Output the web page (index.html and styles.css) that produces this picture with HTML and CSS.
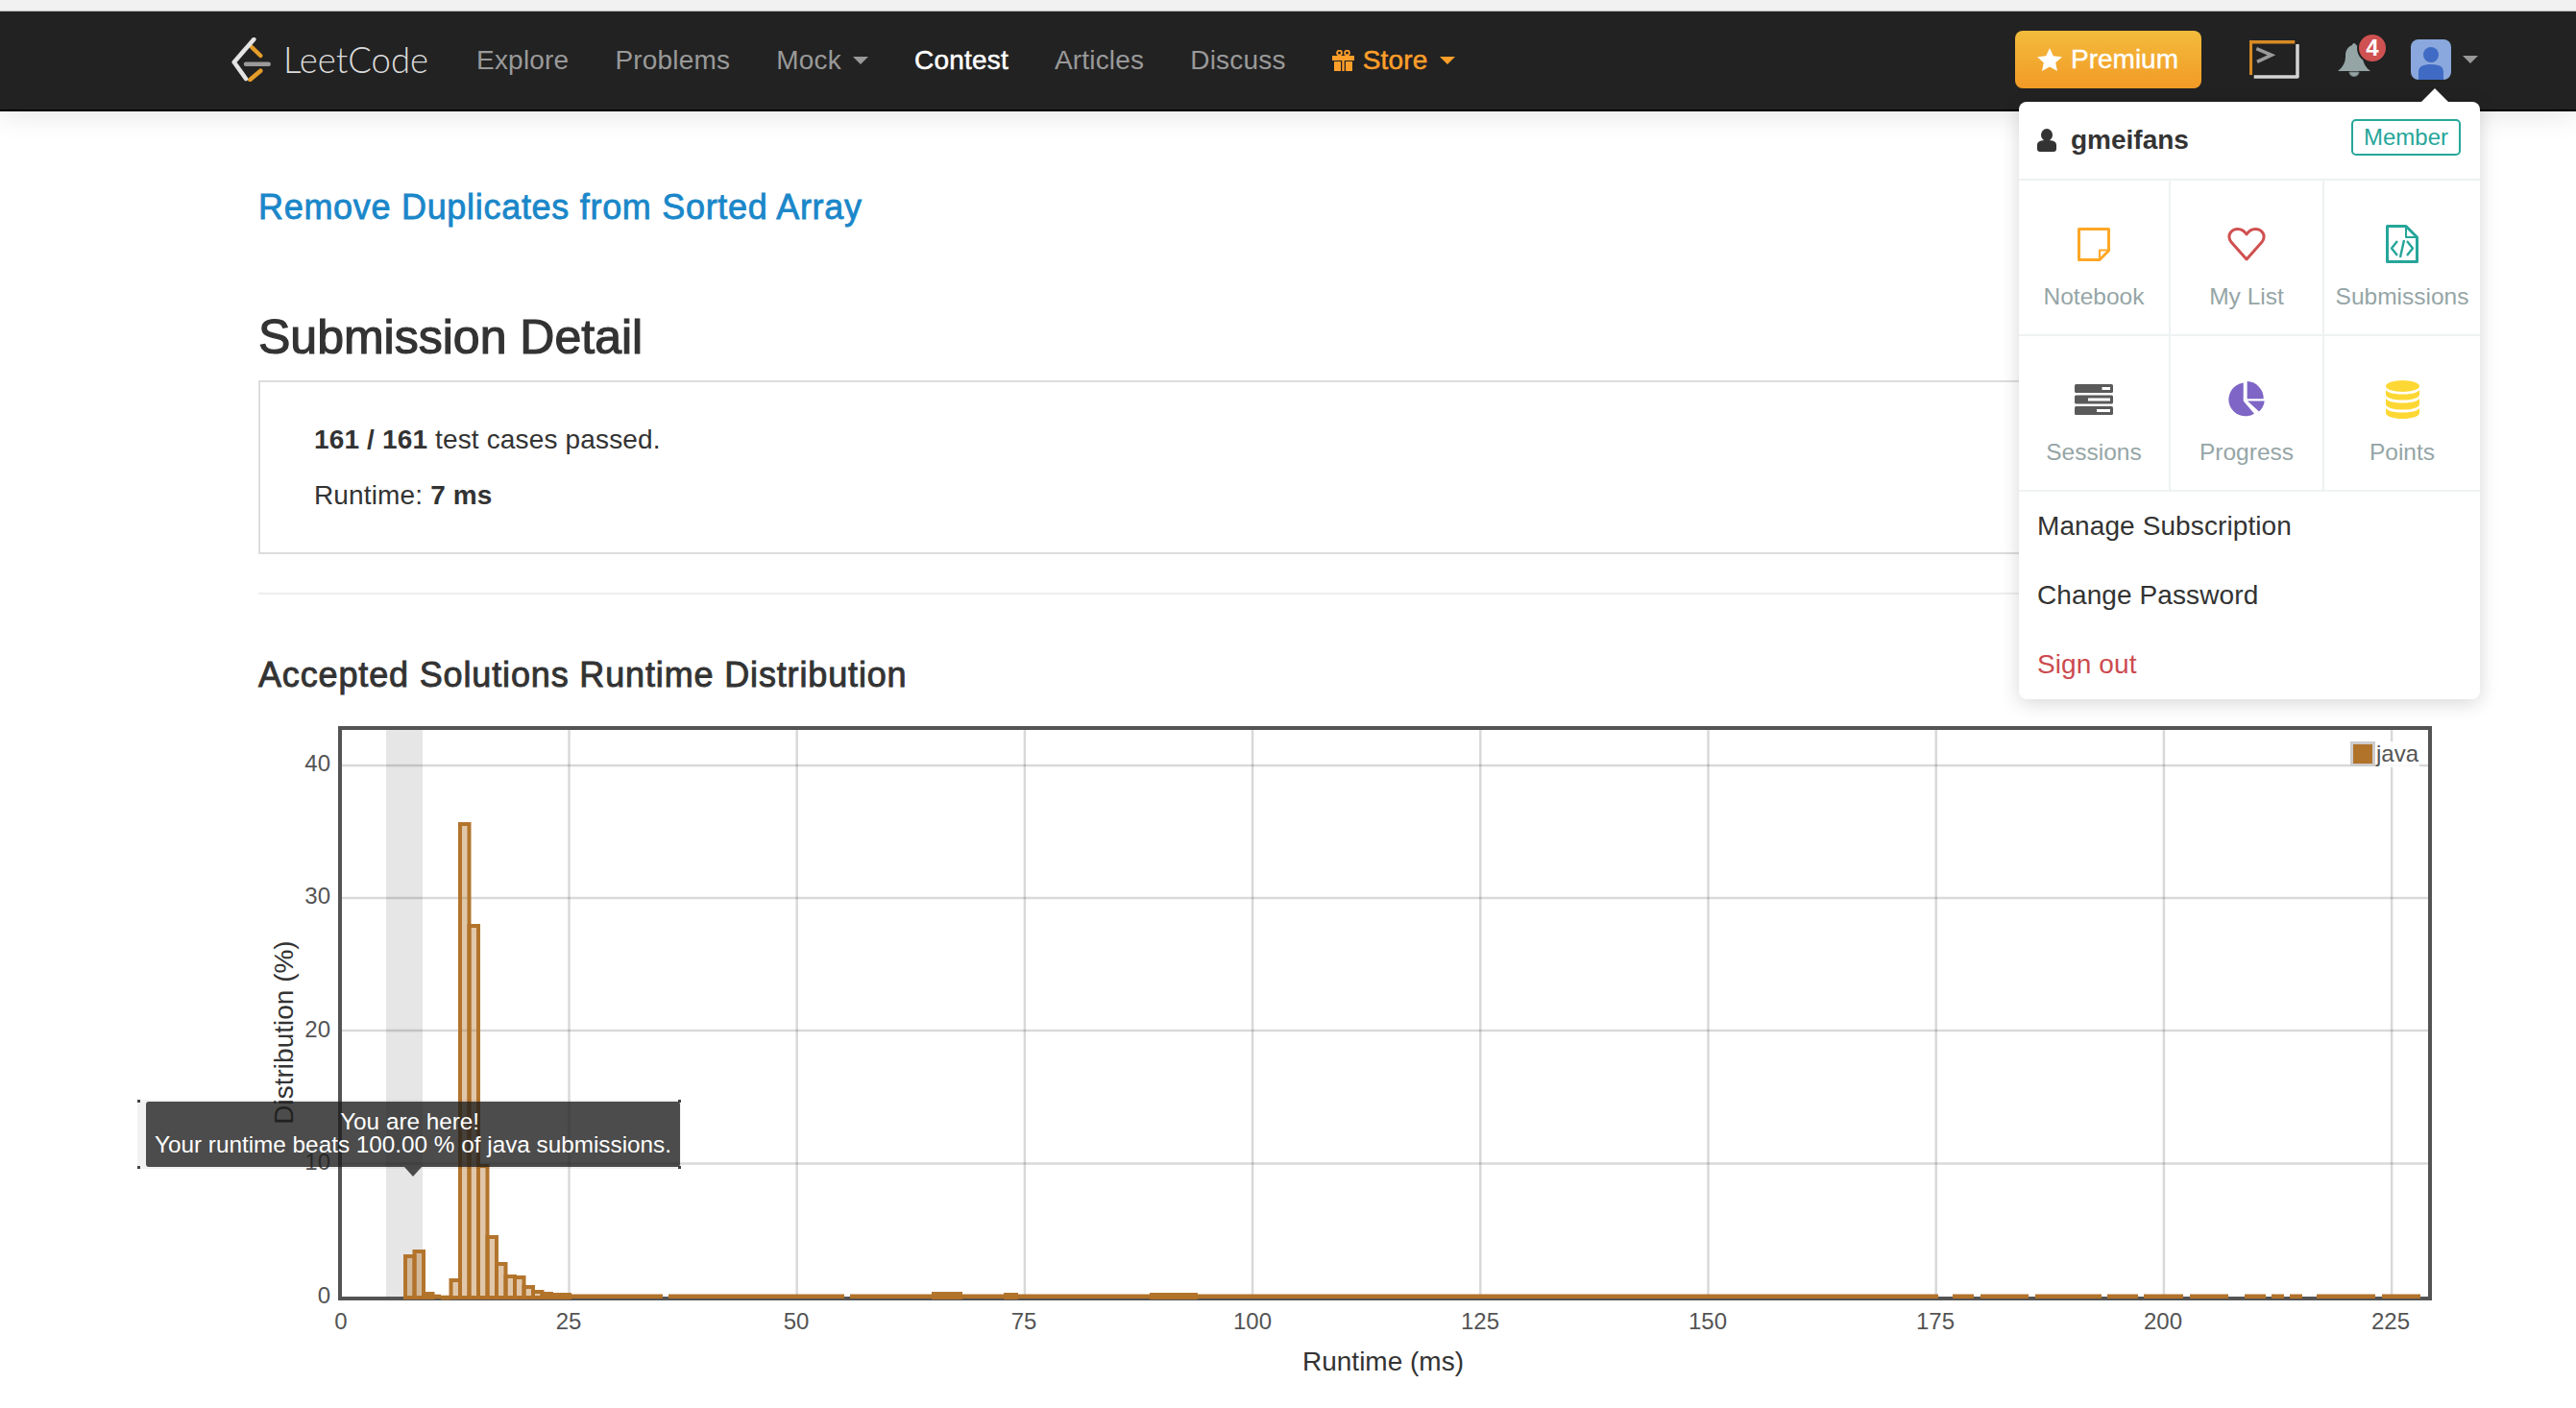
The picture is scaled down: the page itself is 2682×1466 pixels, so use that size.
FILE: index.html
```html
<!DOCTYPE html>
<html lang="en">
<head>
    <meta charset="UTF-8">
    <title>Submission Detail - LeetCode</title>
    <link rel="stylesheet" href="styles.css">
</head>
<body>
    <div class="top-strip"></div>

    <!-- Navbar -->
    <nav class="navbar">
        <a class="brand">
            <svg class="brand-logo" width="44" height="46" viewBox="0 0 44 46">
                <path d="M22 10 L31.3 19" stroke="#e59d2a"/>
                <path d="M31.3 34.7 L20.3 44" stroke="#e59d2a"/>
                <path d="M24.3 2 L3.7 25.7 L16 43" stroke="#e4e4e4"/>
                <path d="M16 27.7 H39.7" stroke="#9a9a9a"/>
            </svg>
            <span class="brand-name">LeetCode</span>
        </a>
        <a class="nav-link">Explore</a>
        <a class="nav-link">Problems</a>
        <a class="nav-link">Mock<i class="caret"></i></a>
        <a class="nav-link active">Contest</a>
        <a class="nav-link">Articles</a>
        <a class="nav-link">Discuss</a>
        <a class="nav-link store">
            <svg class="gift" width="23" height="22" viewBox="0 0 23 22">
                <circle cx="7.5" cy="3" r="2.4" fill="none" stroke="#ff9f2a" stroke-width="1.8"/>
                <circle cx="15.5" cy="3" r="2.4" fill="none" stroke="#ff9f2a" stroke-width="1.8"/>
                <rect x="0" y="6" width="23" height="5" fill="#ff9f2a"/>
                <rect x="2" y="12" width="7" height="10" fill="#ff9f2a"/>
                <rect x="14" y="12" width="7" height="10" fill="#ff9f2a"/>
                <rect x="10.3" y="6" width="2.4" height="16" fill="#ff9f2a"/>
            </svg>Store<i class="caret"></i>
        </a>

        <div class="nav-right">
            <a class="premium-btn">
                <svg width="26" height="24" viewBox="0 0 26 24"><path d="M13 0 L16.8 8.2 L26 9.2 L19.2 15.2 L21 24 L13 19.6 L5 24 L6.8 15.2 L0 9.2 L9.2 8.2 Z" fill="#fff"/></svg>
                Premium
            </a>
            <svg class="terminal" width="52" height="40" viewBox="0 0 52 40" fill="none" stroke-width="3.5">
                <path d="M47.3 1.7 H1.3 V36" stroke="#d68a24"/>
                <path d="M50 4 V38 H4.7" stroke="#d4d4d4" stroke-linejoin="round"/>
                <path d="M7.3 8.7 L23 15.3 L8 22.3" stroke="#9a9a9a"/>
            </svg>
            <div class="bell">
                <svg width="34" height="36" viewBox="0 0 34 36">
                    <path d="M17 1 C16 1 15 2 15 3 C10 5 8 9 8 14 C8 21 6 25 0 30 H34 C28 25 26 21 26 14 C26 8 23 4 19 3 C19 2 18 1 17 1 Z" fill="#95a5a6"/>
                    <path d="M12 31 A5 4.5 0 0 0 22 31 Z" fill="#95a5a6" stroke="#6f7c7d" stroke-width="1"/>
                </svg>
                <span class="badge">4</span>
            </div>
            <div class="avatar">
                <svg width="42" height="42" viewBox="0 0 42 42">
                    <circle cx="21" cy="16" r="8" fill="#3f6bc4"/>
                    <path d="M8 42 V34 C8 28 13 26 21 26 S34 28 34 34 V42 Z" fill="#3f6bc4"/>
                </svg>
            </div>
            <i class="caret avatar-caret"></i>
        </div>
    </nav>

    <!-- User dropdown -->
    <div class="user-menu">
        <div class="user-head">
            <svg width="20" height="24" viewBox="0 0 20 24">
                <ellipse cx="10" cy="6.5" rx="6" ry="6.5" fill="#333"/>
                <path d="M0 21 V17 C0 13 4 12 10 12 S20 13 20 17 V21 Q20 24 17 24 H3 Q0 24 0 21 Z" fill="#333"/>
            </svg>
            <span class="user-name">gmeifans</span>
            <span class="member-tag">Member</span>
        </div>
        <div class="menu-grid">
            <a class="menu-cell">
                <span class="cell-icon">
                    <svg width="34" height="35" viewBox="0 0 34 35" fill="none" stroke="#ffa726" stroke-width="3" stroke-linejoin="round">
                        <path d="M1.5 1.5 H32.5 V24 L23 33.5 H1.5 Z"/>
                        <path d="M32.5 23.5 H23 V33.5" stroke-width="2"/>
                    </svg>
                </span>
                Notebook
            </a>
            <a class="menu-cell">
                <span class="cell-icon">
                    <svg width="40" height="35" viewBox="0 0 40 35" fill="none" stroke="#d05050" stroke-width="3" stroke-linejoin="round">
                        <path d="M20 33 L4 15 C-1 8 4 1.5 11 1.5 C15 1.5 18 4 20 7 C22 4 25 1.5 29 1.5 C36 1.5 41 8 36 15 Z"/>
                    </svg>
                </span>
                My List
            </a>
            <a class="menu-cell">
                <span class="cell-icon">
                    <svg width="34" height="40" viewBox="0 0 34 40" fill="none" stroke="#26a69a" stroke-width="3" stroke-linejoin="round">
                        <path d="M1.5 1.5 H21 L32.5 13 V38.5 H1.5 Z"/>
                        <path d="M21 1.5 V13 H32.5" stroke-width="2"/>
                        <path d="M12 17 L6 24.5 L12 32 M22 17 L28 24.5 L22 32 M19 16 L15 34" stroke-width="2.4"/>
                    </svg>
                </span>
                Submissions
            </a>
            <a class="menu-cell">
                <span class="cell-icon">
                    <svg width="40" height="32" viewBox="0 0 40 32">
                        <rect width="40" height="9" rx="1.5" fill="#5a5a5a"/>
                        <rect y="11.5" width="40" height="9" rx="1.5" fill="#5a5a5a"/>
                        <rect y="23" width="40" height="9" rx="1.5" fill="#5a5a5a"/>
                        <rect x="28.5" y="3" width="8.5" height="3" fill="#fff"/>
                        <rect x="14" y="14.5" width="23" height="3" fill="#fff"/>
                        <rect x="23" y="26" width="14" height="3" fill="#fff"/>
                    </svg>
                </span>
                Sessions
            </a>
            <a class="menu-cell">
                <span class="cell-icon">
                    <svg width="40" height="38" viewBox="0 0 40 38" fill="#7e65c6">
                        <path d="M20.6 0 A18 18 0 0 1 37.7 18.3 H20.6 Z"/>
                        <path d="M16.7 1.5 A17.5 17.5 0 1 0 28 33.8 L16.7 20.5 Z"/>
                        <path d="M21 20.5 H38.7 A18 18 0 0 1 33 31.5 Z"/>
                    </svg>
                </span>
                Progress
            </a>
            <a class="menu-cell">
                <span class="cell-icon">
                    <svg width="35" height="40" viewBox="0 0 35 40" fill="#fdd835">
                        <ellipse cx="17.5" cy="6" rx="17.5" ry="6"/>
                        <path d="M0 10 C2 13 9 14.5 17.5 14.5 S33 13 35 10 V15 C35 18.5 27 20.5 17.5 20.5 S0 18.5 0 15 Z"/>
                        <path d="M0 19 C2 22 9 23.5 17.5 23.5 S33 22 35 19 V25 C35 28.5 27 30.5 17.5 30.5 S0 28.5 0 25 Z"/>
                        <path d="M0 29 C2 32 9 33.5 17.5 33.5 S33 32 35 29 V34 C35 37.5 27 40 17.5 40 S0 37.5 0 34 Z"/>
                    </svg>
                </span>
                Points
            </a>
        </div>
        <a class="menu-item">Manage Subscription</a>
        <a class="menu-item">Change Password</a>
        <a class="menu-item danger">Sign out</a>
    </div>

    <div class="main">
        <h3 class="problem-title">Remove Duplicates from Sorted Array</h3>
        <h2 class="page-title">Submission Detail</h2>
        <div class="result-panel">
            <p><b>161 / 161</b> test cases passed.</p>
            <p class="runtime">Runtime: <b>7 ms</b></p>
        </div>
        <hr class="divider">
        <h3 class="chart-title">Accepted Solutions Runtime Distribution</h3>

        <div class="chart">
            <svg width="2270" height="710" viewBox="270 740 2270 710">
                <!-- band for this submission -->
                <rect x="402" y="760" width="38" height="590" fill="#e6e6e6"/>

                <g class="grid">
                    <path d="M356 797 H2528 M356 935 H2528 M356 1073 H2528 M356 1211.5 H2528"/>
                    <path d="M592.5 760 V1350 M829.7 760 V1350 M1066.9 760 V1350 M1304.1 760 V1350 M1541.3 760 V1350 M1778.5 760 V1350 M2015.7 760 V1350 M2252.9 760 V1350 M2490.1 760 V1350"/>
                </g>

                <rect class="plot-border" x="354" y="758" width="2176" height="594"/>

                <g class="bars">
                    <rect x="422" y="1308" width="9.5" height="43"/>
                    <rect x="431.5" y="1303" width="9.5" height="48"/>
                    <rect x="441" y="1347" width="9.5" height="4"/>
                    <rect x="469.5" y="1333" width="9.5" height="18"/>
                    <rect x="479" y="858" width="9.5" height="493"/>
                    <rect x="488.5" y="964" width="9.5" height="387"/>
                    <rect x="498" y="1214" width="9.5" height="137"/>
                    <rect x="507.5" y="1288" width="9.5" height="63"/>
                    <rect x="517" y="1316" width="9.5" height="35"/>
                    <rect x="526.5" y="1329" width="9.5" height="22"/>
                    <rect x="536" y="1330" width="9.5" height="21"/>
                    <rect x="545.5" y="1340" width="9.5" height="11"/>
                    <rect x="555" y="1345" width="9.5" height="6"/>
                    <rect x="564.5" y="1347" width="9.5" height="4"/>
                    <rect x="574" y="1348" width="9.5" height="3"/>
                    <rect x="583.5" y="1348" width="9.5" height="3"/>
                    <rect x="972" y="1347" width="28" height="4"/>
                    <rect x="1047" y="1348" width="11" height="3"/>
                    <rect x="1199" y="1348" width="46" height="3"/>
                </g>
                <path class="tail" d="M441 1350 H459 M459 1351 H469 M593 1349.7 H690 M696 1349.7 H879 M885 1349.7 H1900 M1900 1349.7 H2018 M2033 1349.7 H2055 M2062 1349.7 H2112 M2119 1349.7 H2188 M2194 1349.7 H2226 M2232 1349.7 H2273 M2280 1349.7 H2320 M2337 1349.7 H2359 M2365 1349.7 H2378 M2384 1349.7 H2397 M2412 1349.7 H2473 M2480 1349.7 H2520"/>

                <g class="tick y-ticks">
                    <text x="344" y="803">40</text>
                    <text x="344" y="941">30</text>
                    <text x="344" y="1080">20</text>
                    <text x="344" y="1218">10</text>
                    <text x="344" y="1357">0</text>
                </g>
                <g class="tick x-ticks">
                    <text x="355" y="1384">0</text>
                    <text x="592" y="1384">25</text>
                    <text x="829" y="1384">50</text>
                    <text x="1066" y="1384">75</text>
                    <text x="1304" y="1384">100</text>
                    <text x="1541" y="1384">125</text>
                    <text x="1778" y="1384">150</text>
                    <text x="2015" y="1384">175</text>
                    <text x="2252" y="1384">200</text>
                    <text x="2489" y="1384">225</text>
                </g>
                <text class="axis-label" x="1440" y="1427">Runtime (ms)</text>
                <text class="axis-label" transform="translate(305 1075) rotate(-90)">Distribution (%)</text>

                <!-- legend -->
                <rect x="2447" y="772" width="72" height="27" fill="#fff" fill-opacity="0.85"/>
                <rect x="2448.5" y="773.5" width="23" height="23" fill="#fff" stroke="#ccc" stroke-width="3"/>
                <rect x="2450" y="775" width="20" height="20" fill="#b1722a"/>
                <text class="legend-text" x="2474" y="793">java</text>
            </svg>

            <div class="tip-frame">
                <div class="tip">You are here!&nbsp;<br>Your runtime beats 100.00 % of java submissions.</div>
            </div>
        </div>
    </div>
</body>
</html>
```

FILE: styles.css
```css
* {
    box-sizing: border-box;
}

body {
    margin: 0;
    background: #fff;
    color: #333;
    font-family: "Liberation Sans", Arial, sans-serif;
    font-size: 28px;
    overflow: hidden;
}

.top-strip {
    position: relative;
    z-index: 2;
    height: 12px;
    background: #f1f1f1;
    border-bottom: 1px solid #b5b5b5;
}

/* navbar */
.navbar {
    position: relative;
    z-index: 1;
    display: flex;
    align-items: center;
    height: 104px;
    padding: 0 102px 2px 240px;
    background: #222;
    border-bottom: 2px solid #000;
    box-shadow: 0 4px 28px rgba(0, 0, 0, 0.1);
}

.brand {
    display: flex;
    align-items: center;
    margin-right: 26px;
}

.brand-logo {
    fill: none;
    stroke-width: 4.5;
    stroke-linecap: round;
    stroke-linejoin: round;
}

.brand-name {
    margin-left: 11px;
    color: #dcdcdc;
    font-family: Lato, sans-serif;
    font-weight: 300;
    font-size: 36.5px;
}

.nav-link {
    display: flex;
    align-items: center;
    padding: 2px 24px 0;
    color: #999;
    letter-spacing: 0.2px;
}

.nav-link.active {
    color: #fff;
    -webkit-text-stroke: 0.5px #fff;
}

.nav-link.store {
    color: #ff9f2a;
    -webkit-text-stroke: 0.5px #ff9f2a;
}

.gift {
    margin-right: 9px;
}

.caret {
    display: inline-block;
    margin-left: 12px;
    border-top: 8px solid #999;
    border-left: 8px solid transparent;
    border-right: 8px solid transparent;
}

.store .caret {
    border-top-color: #ff9f2a;
}

.nav-right {
    display: flex;
    align-items: center;
    margin-left: auto;
}

.premium-btn {
    display: flex;
    align-items: center;
    gap: 9px;
    width: 194px;
    height: 60px;
    padding-left: 23px;
    border-radius: 8px;
    background: linear-gradient(#f3bb3c, #f29a26);
    color: #fff;
    -webkit-text-stroke: 0.4px #fff;
}

.terminal {
    margin-left: 50px;
}

.bell {
    position: relative;
    height: 36px;
    margin-left: 40px;
}

.bell svg {
    display: block;
}

.badge {
    position: absolute;
    top: -10px;
    left: 20px;
    width: 32px;
    height: 32px;
    border: 2px solid #222;
    border-radius: 50%;
    background: #cf5151;
    color: #fff;
    font-size: 24px;
    font-weight: bold;
    line-height: 28px;
    text-align: center;
}

.avatar {
    width: 42px;
    height: 42px;
    margin-left: 42px;
    border-radius: 8px;
    background: #8aa8dd;
    overflow: hidden;
}

.avatar svg {
    display: block;
}

.avatar-caret {
    margin-left: 12px;
}

/* user dropdown */
.user-menu {
    position: absolute;
    top: 106px;
    left: 2102px;
    z-index: 5;
    width: 480px;
    height: 622px;
    border-radius: 8px;
    background: #fff;
    box-shadow: 0 4px 20px rgba(0, 0, 0, 0.16);
}

.user-menu::before {
    content: "";
    position: absolute;
    top: -14px;
    left: 419px;
    border-bottom: 14px solid #fff;
    border-left: 14px solid transparent;
    border-right: 14px solid transparent;
}

.user-head {
    display: flex;
    align-items: center;
    height: 82px;
    padding: 0 20px 0 19px;
    border-bottom: 2px solid #eef2f2;
}

.user-name {
    margin-left: 15px;
    font-weight: bold;
}

.member-tag {
    position: relative;
    top: -3px;
    margin-left: auto;
    padding: 0 11px;
    border: 2px solid #26a69a;
    border-radius: 5px;
    color: #26a69a;
    font-size: 24px;
    line-height: 34px;
}

.menu-grid {
    display: grid;
    grid-template-columns: 158px 160px 162px;
    grid-auto-rows: 162px;
}

.menu-cell {
    display: flex;
    flex-direction: column;
    align-items: center;
    padding-top: 46px;
    border-right: 2px solid #eef2f2;
    border-bottom: 2px solid #eef2f2;
    color: #95a5a6;
    font-size: 24.5px;
    line-height: 30px;
}

.menu-cell:nth-child(3n) {
    border-right: 0;
}

.cell-icon {
    display: flex;
    align-items: center;
    justify-content: center;
    height: 40px;
    margin-bottom: 20px;
}

.menu-item {
    display: block;
    padding: 0 19px;
    line-height: 72px;
    letter-spacing: 0.1px;
}

.menu-item.danger {
    color: #cc4b4f;
}

/* page content */
.main {
    padding-left: 269px;
}

.problem-title {
    margin: 75px 0 0;
    color: #1a87c9;
    font-size: 36px;
    font-weight: normal;
    line-height: 50px;
    letter-spacing: 0.7px;
    -webkit-text-stroke: 0.8px #1a87c9;
}

.page-title {
    margin: 80px 0 0;
    font-size: 50px;
    font-weight: normal;
    line-height: 60px;
    -webkit-text-stroke: 1.2px #333;
}

.result-panel {
    width: 2262px;
    height: 181px;
    margin-top: 15px;
    padding: 45px 56px;
    border: 2px solid #ddd;
    letter-spacing: 0.15px;
}

.result-panel p {
    margin: 0;
    line-height: 30px;
}

.result-panel .runtime {
    margin-top: 28px;
}

.divider {
    width: 2262px;
    height: 2px;
    margin: 40px 0 0;
    border: 0;
    background: #eee;
}

.chart-title {
    margin: 59px 0 0;
    font-size: 36px;
    font-weight: normal;
    line-height: 50px;
    letter-spacing: 0.85px;
    -webkit-text-stroke: 0.9px #333;
}

/* chart */
.chart {
    position: relative;
    margin-top: 12px;
    margin-left: 1px;
}

.chart svg {
    display: block;
}

.grid path {
    fill: none;
    stroke: #000;
    stroke-opacity: 0.15;
    stroke-width: 2.5;
}

.plot-border {
    fill: none;
    stroke: #545454;
    stroke-width: 4;
}

.bars rect {
    fill: #b1722a;
    fill-opacity: 0.4;
    stroke: #b1722a;
    stroke-width: 4;
    stroke-opacity: 0.98;
}

.tail {
    fill: none;
    stroke: #b1722a;
    stroke-width: 4.4;
}

.tick text {
    fill: #545454;
    font-size: 24px;
}

.y-ticks text {
    text-anchor: end;
}

.x-ticks text {
    text-anchor: middle;
}

.axis-label {
    fill: #333;
    font-size: 28px;
    text-anchor: middle;
}

.legend-text {
    fill: #545454;
    font-size: 24px;
}

/* tooltip laid over the plot */
.tip-frame {
    position: absolute;
    top: 405px;
    left: -127px;
    width: 566px;
    height: 72px;
    padding: 2px 1px 2px 9px;
    background:
        linear-gradient(#444, #444) 0 0 / 3px 3px no-repeat,
        linear-gradient(#444, #444) 100% 0 / 3px 3px no-repeat,
        linear-gradient(#444, #444) 0 100% / 3px 3px no-repeat,
        linear-gradient(#444, #444) 100% 100% / 3px 3px no-repeat,
        rgba(0, 0, 0, 0.05);
}

.tip {
    position: relative;
    height: 68px;
    padding-top: 9px;
    border-radius: 3px;
    background: rgba(30, 30, 30, 0.78);
    color: #fff;
    font-size: 24.3px;
    line-height: 24px;
    text-align: center;
    white-space: nowrap;
}

.tip::after {
    content: "";
    position: absolute;
    top: 100%;
    left: 269px;
    border-top: 10px solid rgba(30, 30, 30, 0.78);
    border-left: 9px solid transparent;
    border-right: 9px solid transparent;
}
```
